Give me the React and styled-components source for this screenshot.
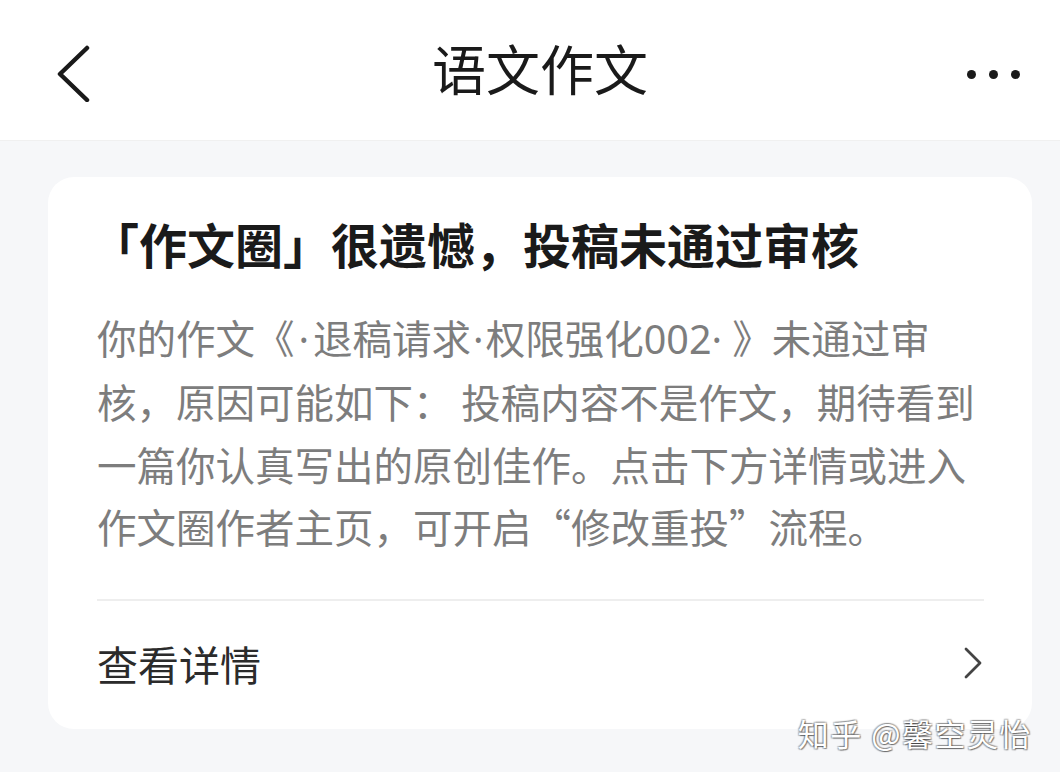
import styled, { createGlobalStyle } from "styled-components";

const GlobalStyle = createGlobalStyle`
  html, body {
    margin: 0;
    padding: 0;
    background-color: #f6f7f9;
  }
  body {
    font-family: "Noto Sans CJK SC", "Noto Sans", sans-serif;
  }
`;

const Page = styled.div`
  position: relative;
  width: 1060px;
  height: 772px;
  background-color: #f6f7f9;
  overflow: hidden;
`;

const Header = styled.header`
  height: 141px;
  background-color: #fff;
  border-bottom: 1px solid #f0f0f0;
  display: grid;
  grid-template-columns: 130px 1fr 110px;
  align-items: center;
  box-sizing: border-box;
`;

const IconButton = styled.div`
  display: flex;
  align-items: center;
  justify-content: ${(p) => (p.$end ? "flex-end" : "flex-start")};
  padding: ${(p) => (p.$end ? "0 40px 0 0" : "4px 0 0 56px")};
  height: 100%;
`;

const Title = styled.h1`
  margin: 0;
  text-align: center;
  font-size: 54px;
  font-weight: 400;
  color: #1a1a1a;
  line-height: 1;
  padding-bottom: 4px;
`;

const Dots = styled.div`
  display: flex;
  gap: 13px;
  margin-top: 8px;
`;

const Dot = styled.span`
  width: 9px;
  height: 9px;
  border-radius: 50%;
  background-color: #1a1a1a;
`;

const Body = styled.main`
  padding: 36px 28px 0 48px;
`;

const Card = styled.section`
  background-color: #fff;
  border-radius: 26px;
  padding: 33px 48px 0 49px;
  width: 984px;
  box-sizing: border-box;
`;

const CardTitle = styled.h2`
  margin: 0;
  font-size: 48px;
  font-weight: 700;
  line-height: 66px;
  color: #1a1a1a;
  margin-left: -6px;
`;

const Message = styled.p`
  margin: 30px 0 0;
  font-size: 39.5px;
  line-height: 62.4px;
  color: #7d7d7d;
`;

const Line = styled.span`
  display: block;
  white-space: nowrap;
`;

const Latin = styled.span`
  font-family: "Noto Sans", "Liberation Sans", sans-serif;
  margin: 0 ${(p) => p.$gap || 0}px;
`;

const Divider = styled.hr`
  margin: 41px 0 0;
  border: none;
  border-top: 2px solid #eeeeee;
`;

const DetailRow = styled.div`
  height: 128px;
  display: flex;
  align-items: center;
  justify-content: space-between;
  padding-bottom: 4px;
  box-sizing: border-box;
`;

const DetailLabel = styled.span`
  font-size: 41px;
  color: #2b2b2b;
`;

const Watermark = styled.div`
  position: absolute;
  right: 28px;
  bottom: 24px;
  font-size: 31px;
  line-height: 1;
  color: #fff;
  letter-spacing: 1.5px;
  text-shadow: 1px 1px 1px rgba(0, 0, 0, 0.45), -1px -1px 1px rgba(0, 0, 0, 0.25),
    1px -1px 1px rgba(0, 0, 0, 0.25), -1px 1px 1px rgba(0, 0, 0, 0.25);
`;

const BackIcon = () => (
  <svg width="36" height="60" viewBox="0 0 36 60">
    <path
      d="M31 6 L4 32 L31 58"
      fill="none"
      stroke="#1a1a1a"
      strokeWidth="4.5"
      strokeLinecap="round"
      strokeLinejoin="round"
    />
  </svg>
);

const ChevronRight = () => (
  <svg width="22" height="34" viewBox="0 0 22 34">
    <path
      d="M4 3 L18 17 L4 31"
      fill="none"
      stroke="#444"
      strokeWidth="2.8"
      strokeLinecap="round"
      strokeLinejoin="round"
    />
  </svg>
);

const App = () => {
  return (
    <Page>
      <GlobalStyle />
      <Header>
        <IconButton>
          <BackIcon />
        </IconButton>
        <Title>语文作文</Title>
        <IconButton $end>
          <Dots>
            <Dot />
            <Dot />
            <Dot />
          </Dots>
        </IconButton>
      </Header>
      <Body>
        <Card>
          <CardTitle>「作文圈」很遗憾，投稿未通过审核</CardTitle>
          <Message>
            <Line>
              你的作文《<Latin $gap={4}>·</Latin>退稿请求<Latin $gap={2}>·</Latin>权限强化
              <Latin>002·</Latin>
              <Latin> </Latin>》未通过审
            </Line>
            <Line>核，原因可能如下： 投稿内容不是作文，期待看到</Line>
            <Line>一篇你认真写出的原创佳作。点击下方详情或进入</Line>
            <Line>作文圈作者主页，可开启“修改重投”流程。</Line>
          </Message>
          <Divider />
          <DetailRow>
            <DetailLabel>查看详情</DetailLabel>
            <ChevronRight />
          </DetailRow>
        </Card>
      </Body>
      <Watermark>知乎 @馨空灵怡</Watermark>
    </Page>
  );
};

export default App;
